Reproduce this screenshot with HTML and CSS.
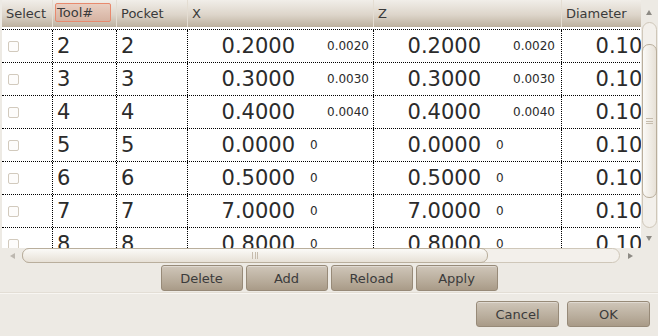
FILE: index.html
```html
<!DOCTYPE html>
<html lang="en">

<head>
    <meta charset="UTF-8">
    <title>Tool Table</title>
    <link rel="stylesheet" href="styles.css">
</head>

<body>
    <div class="scrolled">
        <div class="view">
            <div class="head">
                <div class="hc c-sel">Select</div>
                <div class="hc c-tool"><span class="sorted">Tool#</span></div>
                <div class="hc c-pock">Pocket</div>
                <div class="hc c-x">X</div>
                <div class="hc c-z">Z</div>
                <div class="hc c-dia">Diameter</div>
            </div>
            <div class="rows">
                <div class="row">
                    <div class="cell c-sel"><span class="check"></span></div>
                    <div class="cell c-tool">2</div>
                    <div class="cell c-pock">2</div>
                    <div class="cell c-x"><span class="big">0.2000</span><span class="small">0.0020</span></div>
                    <div class="cell c-z"><span class="big">0.2000</span><span class="small">0.0020</span></div>
                    <div class="cell c-dia"><span class="big">0.1000</span></div>
                </div>
                <div class="row">
                    <div class="cell c-sel"><span class="check"></span></div>
                    <div class="cell c-tool">3</div>
                    <div class="cell c-pock">3</div>
                    <div class="cell c-x"><span class="big">0.3000</span><span class="small">0.0030</span></div>
                    <div class="cell c-z"><span class="big">0.3000</span><span class="small">0.0030</span></div>
                    <div class="cell c-dia"><span class="big">0.1000</span></div>
                </div>
                <div class="row">
                    <div class="cell c-sel"><span class="check"></span></div>
                    <div class="cell c-tool">4</div>
                    <div class="cell c-pock">4</div>
                    <div class="cell c-x"><span class="big">0.4000</span><span class="small">0.0040</span></div>
                    <div class="cell c-z"><span class="big">0.4000</span><span class="small">0.0040</span></div>
                    <div class="cell c-dia"><span class="big">0.1000</span></div>
                </div>
                <div class="row">
                    <div class="cell c-sel"><span class="check"></span></div>
                    <div class="cell c-tool">5</div>
                    <div class="cell c-pock">5</div>
                    <div class="cell c-x"><span class="big">0.0000</span><span class="small zero">0</span></div>
                    <div class="cell c-z"><span class="big">0.0000</span><span class="small zero">0</span></div>
                    <div class="cell c-dia"><span class="big">0.1000</span></div>
                </div>
                <div class="row">
                    <div class="cell c-sel"><span class="check"></span></div>
                    <div class="cell c-tool">6</div>
                    <div class="cell c-pock">6</div>
                    <div class="cell c-x"><span class="big">0.5000</span><span class="small zero">0</span></div>
                    <div class="cell c-z"><span class="big">0.5000</span><span class="small zero">0</span></div>
                    <div class="cell c-dia"><span class="big">0.1000</span></div>
                </div>
                <div class="row">
                    <div class="cell c-sel"><span class="check"></span></div>
                    <div class="cell c-tool">7</div>
                    <div class="cell c-pock">7</div>
                    <div class="cell c-x"><span class="big">7.0000</span><span class="small zero">0</span></div>
                    <div class="cell c-z"><span class="big">7.0000</span><span class="small zero">0</span></div>
                    <div class="cell c-dia"><span class="big">0.1000</span></div>
                </div>
                <div class="row">
                    <div class="cell c-sel"><span class="check"></span></div>
                    <div class="cell c-tool">8</div>
                    <div class="cell c-pock">8</div>
                    <div class="cell c-x"><span class="big">0.8000</span><span class="small zero">0</span></div>
                    <div class="cell c-z"><span class="big">0.8000</span><span class="small zero">0</span></div>
                    <div class="cell c-dia"><span class="big">0.1000</span></div>
                </div>
            </div>
        </div>
        <div class="vbar">
            <span class="arrow up"></span>
            <div class="trough">
                <div class="slider"><span class="grip"></span></div>
            </div>
            <span class="arrow down"></span>
        </div>
        <div class="hbar">
            <span class="arrow left"></span>
            <div class="trough">
                <div class="slider"><span class="grip"></span></div>
            </div>
            <span class="arrow right"></span>
        </div>
        <div class="corner"></div>
    </div>

    <div class="actions">
        <button class="btn">Delete</button>
        <button class="btn">Add</button>
        <button class="btn">Reload</button>
        <button class="btn">Apply</button>
    </div>

    <div class="sep"></div>

    <div class="dialog-btns">
        <button class="btn">Cancel</button>
        <button class="btn">OK</button>
    </div>
</body>

</html>
```

FILE: styles.css
```css
* {
    padding: 0;
    margin: 0;
    box-sizing: border-box;
}

body {
    width: 658px;
    height: 336px;
    overflow: hidden;
    background-color: #edeae4;
    font-family: "DejaVu Sans", "Liberation Sans", sans-serif;
    color: #2b2b2b;
}

/* table with its two scrollbars */
.scrolled {
    display: grid;
    grid-template-columns: 639px 16px;
    grid-template-rows: 248px 15px;
    margin-left: 2px;
}

.view {
    background-color: #fff;
    overflow: hidden;
    width: 639px;
}

.head {
    display: flex;
    height: 27px;
    width: 800px;
    background: linear-gradient(#f1eee9, #ddd5ca 55%, #bdb19f);
}

.hc {
    flex: none;
    font-size: 13px;
    line-height: 27px;
    color: #3a3a3a;
    padding-left: 4px;
    border-right: 1px solid #e4ddd2;
    background-clip: padding-box;
}

.sorted {
    display: inline-block;
    margin-left: -2px;
    width: 56px;
    height: 19px;
    line-height: 17px;
    padding-left: 1px;
    border: 1px solid #e88a6e;
    border-radius: 2px;
    background: linear-gradient(#e9cfc2, #d6b3a2);
    vertical-align: 1px;
}

.rows {
    margin-top: 2px;
    width: 800px;
}

.row {
    display: flex;
    height: 33px;
    border-top: 1px dotted #000;
}

.cell {
    flex: none;
    display: flex;
    align-items: center;
    font-size: 21px;
    border-right: 1px dotted #000;
    padding-left: 4px;
}

.c-sel {
    width: 51px;
}

.c-tool {
    width: 64px;
}

.c-pock {
    width: 71px;
}

.c-x {
    width: 186px;
}

.c-z {
    width: 188px;
}

.c-dia {
    width: 200px;
}

.cell.c-x,
.cell.c-z,
.cell.c-dia {
    padding-left: 0;
}

.cell.c-sel {
    padding-left: 6px;
}

.check {
    width: 11px;
    height: 11px;
    border: 1px solid #d2cabd;
    border-radius: 2px;
    background-color: #fdfcfb;
}

.big {
    display: inline-block;
    width: 107px;
    text-align: right;
}

.small {
    font-size: 12px;
    margin-left: 32px;
}

.small.zero {
    margin-left: 15px;
}

/* scrollbars */
.vbar,
.hbar {
    display: flex;
    align-items: center;
}

.vbar {
    flex-direction: column;
}

.vbar .arrow {
    height: 22px;
}

.vbar .arrow.down {
    height: 20px;
}

.hbar .arrow {
    width: 20px;
    height: 15px;
}

.hbar .arrow.right {
    width: 21px;
}

.arrow {
    display: flex;
    align-items: center;
    justify-content: center;
    flex: none;
}

.arrow::before {
    content: "";
    border: 3px solid transparent;
}

.arrow.up::before {
    border-bottom: 5px solid #8d8a84;
    border-top: 0;
    margin-top: 2px;
}

.arrow.down::before {
    border-top: 5px solid #8d8a84;
    border-bottom: 0;
}

.arrow.left::before {
    border-right: 5px solid #bdb8b0;
    border-left: 0;
}

.arrow.right::before {
    border-left: 5px solid #8d8a84;
    border-right: 0;
}

.trough {
    background-color: #f3f0eb;
    border: 1px solid #cfc7b9;
    border-radius: 8px;
}

.vbar .trough {
    width: 15px;
    height: 206px;
    padding-top: 21px;
}

.hbar .trough {
    width: 598px;
    height: 15px;
}

.slider {
    display: flex;
    align-items: center;
    justify-content: center;
    border: 1px solid #b9ae9c;
    border-radius: 7px;
}

.vbar .slider {
    width: 15px;
    height: 154px;
    margin-left: -1px;
    background: linear-gradient(90deg, #fbfaf7, #e7e1d7);
}

.hbar .slider {
    width: 466px;
    height: 15px;
    margin-top: -1px;
    margin-left: -1px;
    background: linear-gradient(#fbfaf7, #e7e1d7);
}

.grip {
    display: block;
}

.hbar .grip {
    width: 6px;
    height: 7px;
    border-left: 1px solid #c6bcad;
    border-right: 1px solid #c6bcad;
    background: linear-gradient(90deg, transparent 2px, #c6bcad 2px, #c6bcad 3px, transparent 3px);
}

.vbar .grip {
    width: 7px;
    height: 6px;
    border-top: 1px solid #c6bcad;
    border-bottom: 1px solid #c6bcad;
    background: linear-gradient(transparent 2px, #c6bcad 2px, #c6bcad 3px, transparent 3px);
}

/* buttons */
.btn {
    width: 82px;
    height: 26px;
    font-family: "DejaVu Sans", "Liberation Sans", sans-serif;
    font-size: 13px;
    color: #3b3b3b;
    border: 1px solid #978a78;
    border-radius: 3px;
    background: linear-gradient(#cfc6b9, #b9ad9c 60%, #a99b88);
    box-shadow: inset 0 1px 0 rgba(255, 255, 255, 0.35);
}

.actions {
    display: flex;
    justify-content: center;
    gap: 3px;
    margin-top: 2px;
}

.sep {
    height: 2px;
    margin-top: 1px;
    border-top: 1px solid #e3ded5;
    border-bottom: 1px solid #f8f6f2;
}

.dialog-btns {
    display: flex;
    justify-content: flex-end;
    gap: 8px;
    padding-right: 8px;
    margin-top: 7px;
}

.dialog-btns .btn {
    width: 83px;
}
```
